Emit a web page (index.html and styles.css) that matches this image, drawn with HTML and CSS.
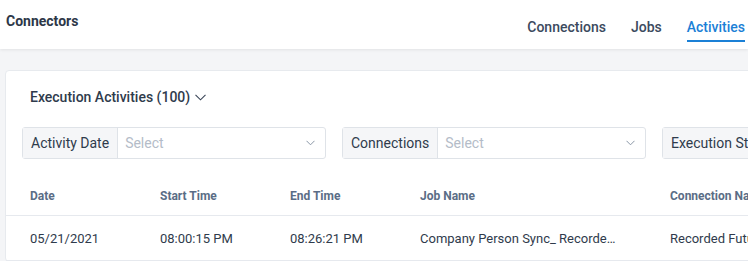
FILE: index.html
```html
<!DOCTYPE html>
<html>
<head>
    <title>Connectors - Activities</title>
    <link rel="stylesheet" href="styles.css">
</head>
<body>
    <div class="topbar">
        <div class="brand">Connectors</div>
        <nav class="tabs">
            <a class="tab">Connections</a>
            <a class="tab">Jobs</a>
            <a class="tab active">Activities</a>
        </nav>
    </div>

    <div class="main">
        <div class="card">
            <div class="card-title">
                Execution Activities (100)
                <svg class="chev-lg" width="11" height="7" viewBox="0 0 11 7"><path d="M0.5 0.8 L5.5 5.8 L10.5 0.8" fill="none" stroke="#3a4658" stroke-width="1.1"/></svg>
            </div>

            <div class="filters">
                <div class="filter">
                    <span class="filter-label">Activity Date</span>
                    <span class="filter-select">Select
                        <svg class="chev" width="9" height="6" viewBox="0 0 9 6"><path d="M0.5 0.8 L4.5 4.8 L8.5 0.8" fill="none" stroke="#8a96a6" stroke-width="1"/></svg>
                    </span>
                </div>
                <div class="filter">
                    <span class="filter-label">Connections</span>
                    <span class="filter-select">Select
                        <svg class="chev" width="9" height="6" viewBox="0 0 9 6"><path d="M0.5 0.8 L4.5 4.8 L8.5 0.8" fill="none" stroke="#8a96a6" stroke-width="1"/></svg>
                    </span>
                </div>
                <div class="filter">
                    <span class="filter-label">Execution Status</span>
                    <span class="filter-select">Select
                        <svg class="chev" width="9" height="6" viewBox="0 0 9 6"><path d="M0.5 0.8 L4.5 4.8 L8.5 0.8" fill="none" stroke="#8a96a6" stroke-width="1"/></svg>
                    </span>
                </div>
            </div>

            <div class="table">
                <div class="row head">
                    <div>Date</div>
                    <div>Start Time</div>
                    <div>End Time</div>
                    <div>Job Name</div>
                    <div>Connection Name</div>
                </div>
                <div class="row">
                    <div>05/21/2021</div>
                    <div>08:00:15 PM</div>
                    <div>08:26:21 PM</div>
                    <div class="clip">Company Person Sync_ Recorded Future</div>
                    <div>Recorded Future</div>
                </div>
            </div>
        </div>
    </div>
</body>
</html>
```

FILE: styles.css
```css
body {
    font-family: Roboto, "Liberation Sans", sans-serif;
    margin: 0;
    padding: 0;
    background-color: #f4f5f7;
    overflow: hidden;
    color: #2f3b4c;
}
.topbar {
    height: 49px;
    background-color: #fff;
    box-shadow: 0 1px 3px rgba(0, 0, 0, 0.08);
    display: flex;
    justify-content: space-between;
    padding-left: 6px;
    padding-right: 3px;
    position: relative;
}
.brand {
    font-size: 14px;
    font-weight: bold;
    color: #2d3748;
    padding-top: 13px;
}
.tabs {
    display: flex;
    align-items: flex-end;
}
.tab {
    font-size: 14px;
    font-weight: 500;
    color: #3b4a5e;
    margin-left: 25px;
    padding-bottom: 5px;
    border-bottom: 2px solid transparent;
    margin-bottom: 7px;
}
.tab.active {
    color: #1b80d6;
    border-bottom-color: #1b80d6;
}
.main {
    padding: 21px 0 0 5px;
}
.card {
    width: 1100px;
    background-color: #fff;
    border: 1px solid #e7eaee;
    border-radius: 4px;
}
.card-title {
    font-size: 14px;
    font-weight: 500;
    color: #2f3b4c;
    line-height: 20px;
    padding: 16px 0 0 24px;
    display: flex;
    align-items: center;
}
.chev-lg {
    margin-left: 5px;
}
.filters {
    display: flex;
    gap: 16px;
    padding: 20px 0 0 16px;
}
.filter {
    display: flex;
    width: 302px;
    height: 30px;
    border: 1px solid #dfe3e8;
    border-radius: 3px;
    font-size: 14px;
}
.filter-label {
    background-color: #f5f6f8;
    border-right: 1px solid #dfe3e8;
    padding: 0 8px;
    display: flex;
    align-items: center;
    color: #2f3b4c;
    white-space: nowrap;
}
.filter-select {
    flex: 1;
    display: flex;
    align-items: center;
    justify-content: space-between;
    padding: 0 10px 0 7px;
    color: #b4bcc8;
}
.table {
    margin-top: 18px;
}
.row {
    display: grid;
    grid-template-columns: 154px 130px 130px 250px 1fr;
    align-items: center;
    height: 44px;
    border-bottom: 1px solid #e6e9ee;
    font-size: 13px;
    color: #2f3b4c;
}
.row div:first-child {
    padding-left: 24px;
}
.row.head {
    height: 38px;
    font-size: 12px;
    font-weight: bold;
    color: #5a6d86;
}
.clip {
    white-space: nowrap;
    overflow: hidden;
    text-overflow: ellipsis;
    padding-right: 51px;
}
```
